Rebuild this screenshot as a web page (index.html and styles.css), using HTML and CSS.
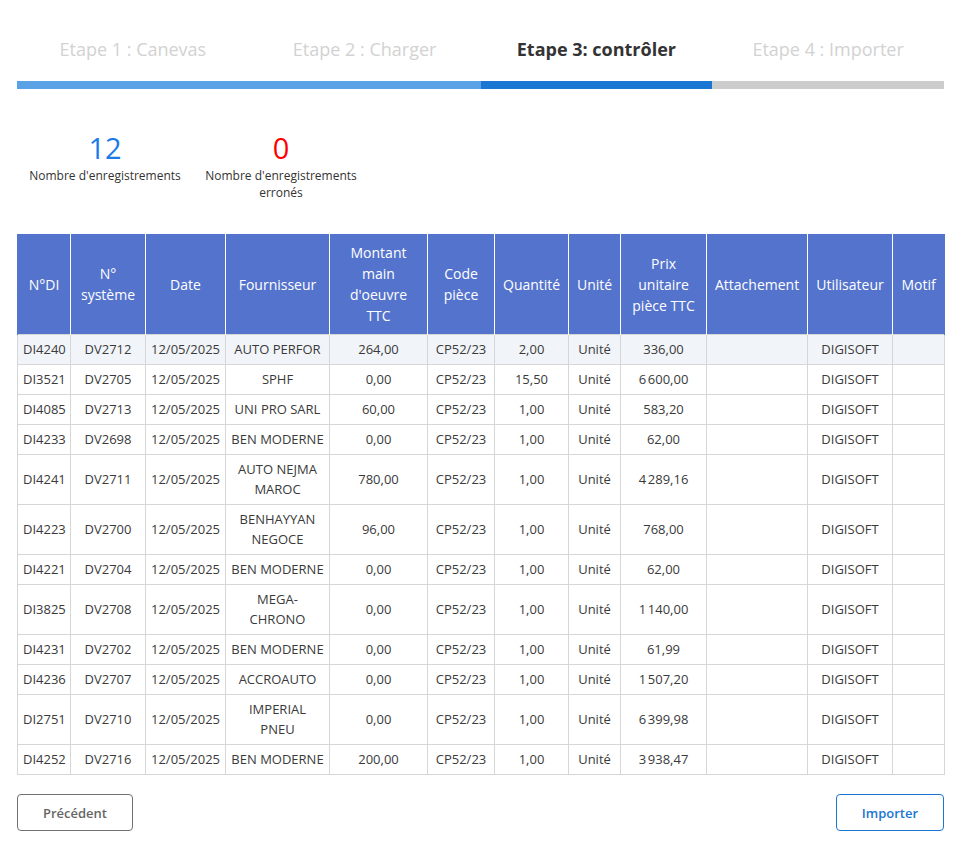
FILE: index.html
```html
<!DOCTYPE html>
<html lang="fr">
<head>
    <meta charset="UTF-8">
    <meta name="viewport" content="width=device-width, initial-scale=1.0">
    <title>Import - contrôle</title>
    <link rel="stylesheet" href="styles.css">
</head>
<body>

<div class="wizard">
    <!-- Steps -->
    <div class="steps">
        <div class="step done">Etape 1 : Canevas</div>
        <div class="step done">Etape 2 : Charger</div>
        <div class="step current">Etape 3: contrôler</div>
        <div class="step">Etape 4 : Importer</div>
    </div>

    <!-- Counters -->
    <div class="stats">
        <div class="stat">
            <div class="stat-value total">12</div>
            <div class="stat-label">Nombre d'enregistrements</div>
        </div>
        <div class="stat">
            <div class="stat-value errors">0</div>
            <div class="stat-label">Nombre d'enregistrements erronés</div>
        </div>
    </div>

    <!-- Records -->
    <table class="records">
        <colgroup>
            <col style="width:53px"><col style="width:75px"><col style="width:80px"><col style="width:104px">
            <col style="width:98px"><col style="width:67px"><col style="width:74px"><col style="width:52px">
            <col style="width:86px"><col style="width:101px"><col style="width:85px"><col style="width:52px">
        </colgroup>
        <thead>
            <tr>
                <th>N°DI</th>
                <th>N° système</th>
                <th>Date</th>
                <th>Fournisseur</th>
                <th>Montant main d'oeuvre TTC</th>
                <th>Code pièce</th>
                <th>Quantité</th>
                <th>Unité</th>
                <th>Prix unitaire pièce TTC</th>
                <th>Attachement</th>
                <th>Utilisateur</th>
                <th>Motif</th>
            </tr>
        </thead>
        <tbody>
            <tr class="selected"><td>DI4240</td><td>DV2712</td><td>12/05/2025</td><td>AUTO PERFOR</td><td>264,00</td><td>CP52/23</td><td>2,00</td><td>Unité</td><td>336,00</td><td></td><td>DIGISOFT</td><td></td></tr>
            <tr><td>DI3521</td><td>DV2705</td><td>12/05/2025</td><td>SPHF</td><td>0,00</td><td>CP52/23</td><td>15,50</td><td>Unité</td><td>6&#8239;600,00</td><td></td><td>DIGISOFT</td><td></td></tr>
            <tr><td>DI4085</td><td>DV2713</td><td>12/05/2025</td><td>UNI PRO SARL</td><td>60,00</td><td>CP52/23</td><td>1,00</td><td>Unité</td><td>583,20</td><td></td><td>DIGISOFT</td><td></td></tr>
            <tr><td>DI4233</td><td>DV2698</td><td>12/05/2025</td><td>BEN MODERNE</td><td>0,00</td><td>CP52/23</td><td>1,00</td><td>Unité</td><td>62,00</td><td></td><td>DIGISOFT</td><td></td></tr>
            <tr><td>DI4241</td><td>DV2711</td><td>12/05/2025</td><td>AUTO NEJMA MAROC</td><td>780,00</td><td>CP52/23</td><td>1,00</td><td>Unité</td><td>4&#8239;289,16</td><td></td><td>DIGISOFT</td><td></td></tr>
            <tr><td>DI4223</td><td>DV2700</td><td>12/05/2025</td><td>BENHAYYAN NEGOCE</td><td>96,00</td><td>CP52/23</td><td>1,00</td><td>Unité</td><td>768,00</td><td></td><td>DIGISOFT</td><td></td></tr>
            <tr><td>DI4221</td><td>DV2704</td><td>12/05/2025</td><td>BEN MODERNE</td><td>0,00</td><td>CP52/23</td><td>1,00</td><td>Unité</td><td>62,00</td><td></td><td>DIGISOFT</td><td></td></tr>
            <tr><td>DI3825</td><td>DV2708</td><td>12/05/2025</td><td>MEGA-CHRONO</td><td>0,00</td><td>CP52/23</td><td>1,00</td><td>Unité</td><td>1&#8239;140,00</td><td></td><td>DIGISOFT</td><td></td></tr>
            <tr><td>DI4231</td><td>DV2702</td><td>12/05/2025</td><td>BEN MODERNE</td><td>0,00</td><td>CP52/23</td><td>1,00</td><td>Unité</td><td>61,99</td><td></td><td>DIGISOFT</td><td></td></tr>
            <tr><td>DI4236</td><td>DV2707</td><td>12/05/2025</td><td>ACCROAUTO</td><td>0,00</td><td>CP52/23</td><td>1,00</td><td>Unité</td><td>1&#8239;507,20</td><td></td><td>DIGISOFT</td><td></td></tr>
            <tr><td>DI2751</td><td>DV2710</td><td>12/05/2025</td><td>IMPERIAL PNEU</td><td>0,00</td><td>CP52/23</td><td>1,00</td><td>Unité</td><td>6&#8239;399,98</td><td></td><td>DIGISOFT</td><td></td></tr>
            <tr><td>DI4252</td><td>DV2716</td><td>12/05/2025</td><td>BEN MODERNE</td><td>200,00</td><td>CP52/23</td><td>1,00</td><td>Unité</td><td>3&#8239;938,47</td><td></td><td>DIGISOFT</td><td></td></tr>
        </tbody>
    </table>

    <!-- Navigation -->
    <div class="actions">
        <button class="btn btn-back">Précédent</button>
        <button class="btn btn-next">Importer</button>
    </div>
</div>

</body>
</html>
```

FILE: styles.css
```css
body {
    font-family: "Open Sans", Arial, sans-serif;
    background-color: #fff;
    color: #3a3a3a;
    margin: 0;
    padding: 0;
}

.wizard {
    width: 927px;
    margin-left: 17px;
    padding-top: 37px;
}

/* Steps */
.steps {
    display: flex;
}

.step {
    flex: 1;
    text-align: center;
    font-size: 18px;
    line-height: 25px;
    color: #d2d2d2;
    padding-bottom: 19px;
    border-bottom: 8px solid #cccccc;
}

.step.done {
    border-bottom-color: #5aa1e6;
}

.step.current {
    color: #333;
    font-weight: 700;
    border-bottom-color: #1976d2;
}

/* Counters */
.stats {
    display: flex;
    gap: 16px;
    margin: 40px 0 0 8px;
}

.stat {
    width: 160px;
    text-align: center;
}

.stat-value {
    font-size: 29px;
    line-height: 38px;
}

.stat-value.total {
    color: #1a7be8;
}

.stat-value.errors {
    color: #ff0000;
}

.stat-label {
    font-size: 12px;
    line-height: 17px;
    color: #333;
}

/* Table */
.records {
    width: 927px;
    border-collapse: collapse;
    table-layout: fixed;
    margin-top: 33px;
    font-size: 13px;
}

.records th {
    background-color: #5473cc;
    color: #fff;
    font-weight: 400;
    font-size: 14px;
    line-height: 21px;
    padding: 8px 8px 8px;
    border-left: 1px solid #fff;
    border-right: 1px solid #fff;
}

.records th:first-child {
    border-left-color: #5473cc;
}

.records th:last-child {
    border-right-color: #5473cc;
}

.records td {
    text-align: center;
    line-height: 20px;
    padding: 4px 5px 5px;
    border: 1px solid #d6d6d6;
}

.records tr.selected td {
    background-color: #f1f4f8;
}

/* Buttons */
.actions {
    display: flex;
    justify-content: space-between;
    margin-top: 19px;
}

.btn {
    font-family: inherit;
    font-size: 13px;
    font-weight: 600;
    height: 37px;
    background-color: transparent;
    border-radius: 4px;
    cursor: pointer;
}

.btn-back {
    width: 116px;
    color: #666;
    border: 1px solid #707070;
}

.btn-next {
    width: 108px;
    color: #1976d2;
    border: 1px solid #1976d2;
}
```
